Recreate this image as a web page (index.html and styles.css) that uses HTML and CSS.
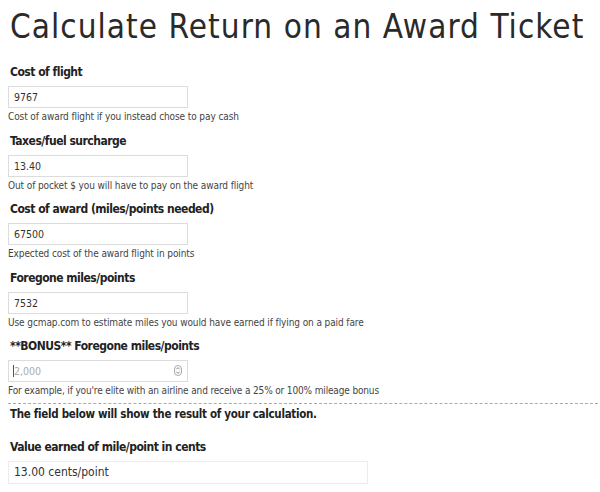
FILE: index.html
```html
<!DOCTYPE html>
<html>
<head>
<meta charset="utf-8">
<link rel="stylesheet" href="styles.css">
</head>
<body>
<h1 class="title">Calculate Return on an Award Ticket</h1>
<form class="calc">
  <div class="field">
    <label class="label">Cost of flight</label>
    <input class="input" type="text" value="9767">
    <p class="help">Cost of award flight if you instead chose to pay cash</p>
  </div>
  <div class="field">
    <label class="label">Taxes/fuel surcharge</label>
    <input class="input" type="text" value="13.40">
    <p class="help">Out of pocket $ you will have to pay on the award flight</p>
  </div>
  <div class="field">
    <label class="label">Cost of award (miles/points needed)</label>
    <input class="input" type="text" value="67500">
    <p class="help">Expected cost of the award flight in points</p>
  </div>
  <div class="field">
    <label class="label">Foregone miles/points</label>
    <input class="input" type="text" value="7532">
    <p class="help">Use gcmap.com to estimate miles you would have earned if flying on a paid fare</p>
  </div>
  <div class="field field-last">
    <label class="label">**BONUS** Foregone miles/points</label>
    <div class="num-wrap">
      <input class="input input-num" type="text" placeholder="2,000">
      <span class="caret"></span>
      <svg class="spin" width="8" height="11" viewBox="0 0 8 11"><rect x="0.5" y="0.5" width="7" height="10" rx="3.5" fill="none" stroke="#aaa"/><path d="M2.3 4.3 L4 2.6 L5.7 4.3 M2.3 6.7 L4 8.4 L5.7 6.7" fill="none" stroke="#777" stroke-width="0.9"/></svg>
    </div>
    <p class="help help-bonus">For example, if you're elite with an airline and receive a 25% or 100% mileage bonus</p>
  </div>
  <div class="divider"></div>
  <p class="note">The field below will show the result of your calculation.</p>
  <div class="field result-field">
    <label class="label">Value earned of mile/point in cents</label>
    <div class="result">13.00 cents/point</div>
  </div>
</form>
</body>
</html>
```
FILE: styles.css
```css
html, body {
  margin: 0;
  padding: 0;
  background: #fff;
}
body {
  padding: 0 2px 0 8px;
  font-family: "DejaVu Sans Condensed", "DejaVu Sans", sans-serif;
  color: #333;
}
.title {
  margin: 9px 0 0 2px;
  font-size: 33px;
  font-weight: 300;
  line-height: 36px;
  color: #2a2a2a;
  letter-spacing: 1.05px;
}
.calc {
  margin: 19px 0 0;
}
.field {
  display: flex;
  flex-direction: column;
  align-items: flex-start;
  margin-bottom: 8.5px;
}
.field-last {
  margin-bottom: 5px;
}
.label {
  font-size: 12px;
  font-weight: bold;
  line-height: 16px;
  color: #222;
  letter-spacing: -0.5px;
  margin: 0 0 6px 2px;
}
.input {
  box-sizing: border-box;
  width: 180px;
  height: 22px;
  margin: 0;
  padding: 0 5px;
  border: 1px solid #dcdcdc;
  font-family: inherit;
  font-size: 10.5px;
  color: #333;
  background: #fff;
  outline: none;
}
.input::placeholder {
  color: #aaa;
}
.num-wrap {
  position: relative;
  width: 180px;
  height: 22px;
}
.caret {
  position: absolute;
  left: 5px;
  top: 5px;
  width: 1px;
  height: 12px;
  background: #555;
}
.spin {
  position: absolute;
  right: 6px;
  top: 5px;
}
.help {
  margin: 2px 0 0;
  font-size: 10px;
  line-height: 14px;
  color: #444;
  letter-spacing: -0.1px;
}
.help-bonus {
  letter-spacing: -0.15px;
}
.divider {
  border-top: 1px dashed #aaa;
  margin: 0;
}
.note {
  margin: 2px 0 0 2px;
  font-size: 11.5px;
  font-weight: bold;
  line-height: 16px;
  color: #222;
  letter-spacing: -0.3px;
}
.result-field {
  margin-top: 17px;
}
.result {
  box-sizing: border-box;
  width: 360px;
  height: 23px;
  padding: 0 5px;
  border: 1px solid #ececec;
  font-size: 12px;
  line-height: 21px;
  color: #333;
}
```
